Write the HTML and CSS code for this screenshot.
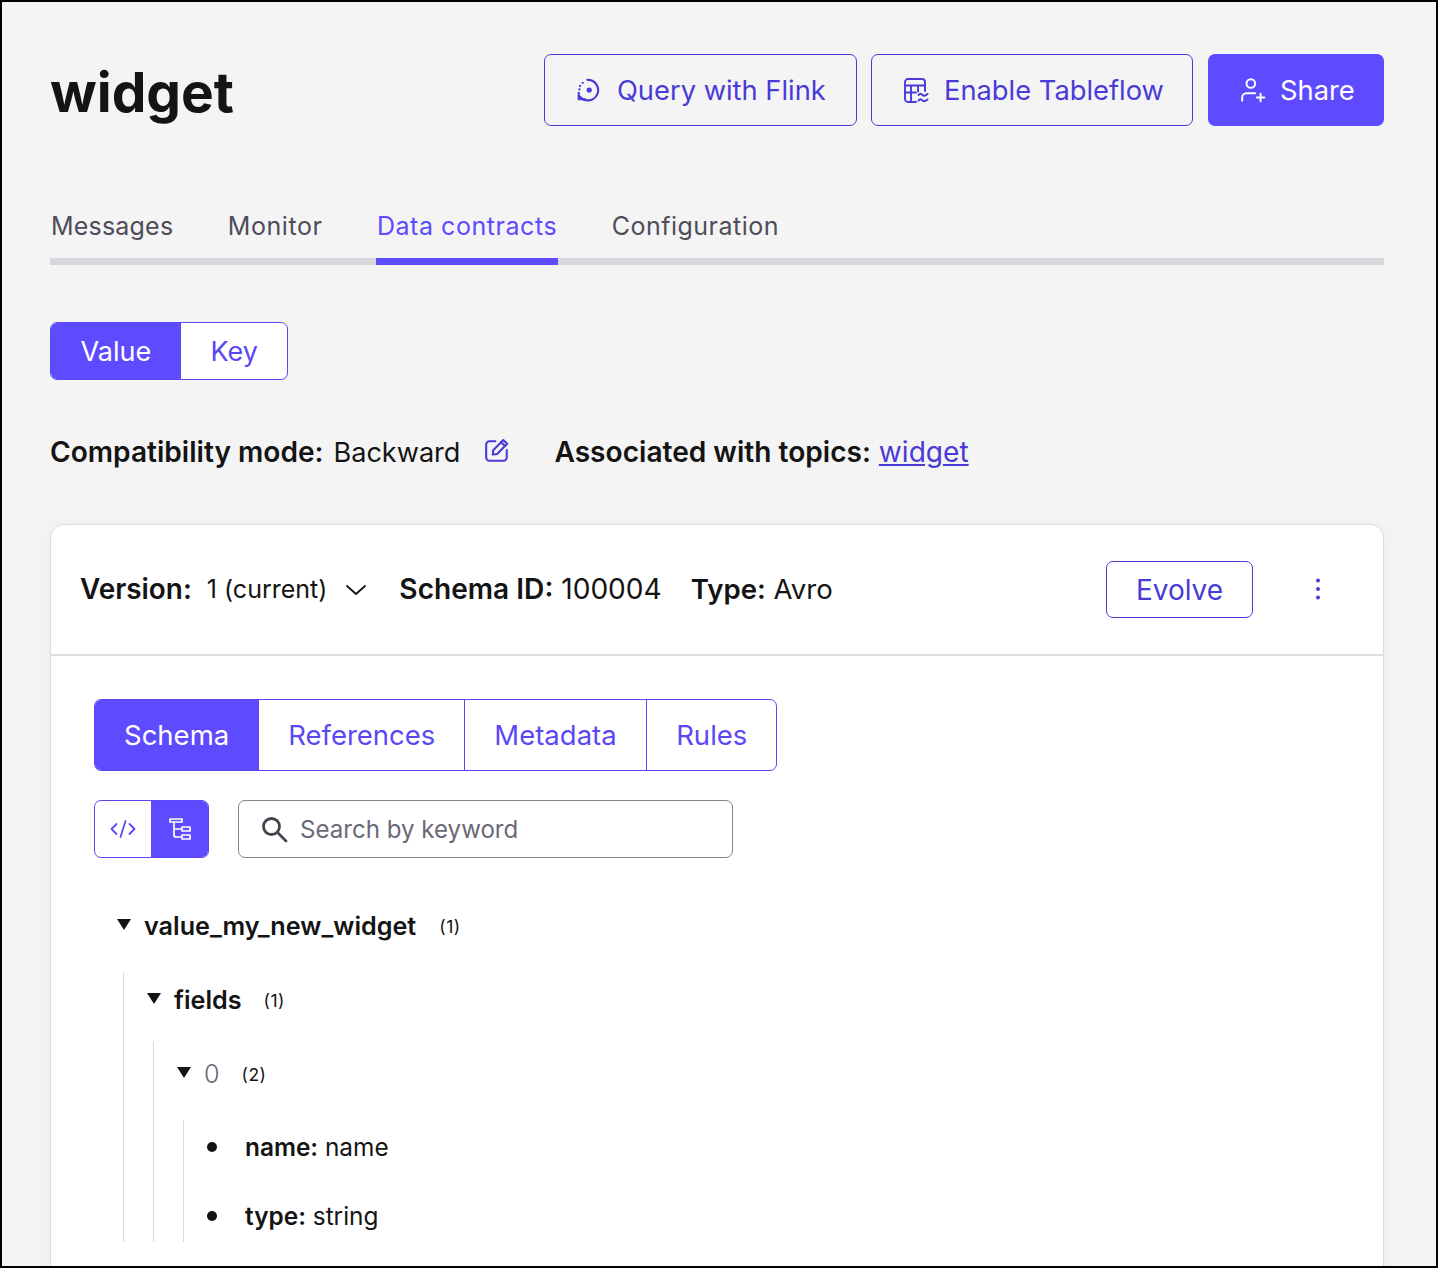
FILE: index.html
```html
<!DOCTYPE html>
<html lang="en">
<head>
<meta charset="utf-8">
<title>widget</title>
<link rel="stylesheet" href="styles.css">
</head>
<body>
<div class="frame">
  <header class="head">
    <h1 class="title">widget</h1>
    <div class="actions">
      <button class="btn btn-outline q">
        <svg class="ico" viewBox="0 0 24 24" fill="none" stroke="currentColor" stroke-width="2" stroke-linecap="round" stroke-linejoin="round"><path d="M10.500 2.600A9.500 9.500 0 1 1 3.500 18"/><path d="M3.200 11.500v.01M3.800 8.300v.01M6.200 5.400v.01" stroke-width="2.100"/><path d="M2.500 14.500V20.500h6"/><circle cx="12.200" cy="12" r="2.400" fill="currentColor" stroke="none"/></svg>
        <span>Query with Flink</span>
      </button>
      <button class="btn btn-outline t">
        <svg class="ico" viewBox="0 0 26 26" fill="none" stroke="currentColor" stroke-width="1.900" stroke-linecap="round" stroke-linejoin="round"><path d="M12 25H4a3 3 0 0 1-3-3V5a3 3 0 0 1 3-3h14a3 3 0 0 1 3 3v9"/><path d="M1 8.500h20M1 15.500h11M7 8.500V25M14 8.500v6"/><path d="M14.500 18c1.500-1.600 2.500-1.600 4 0 1.200 1.200 2.500 1.200 5 -1M14.500 23.500c1.500-1.600 2.500-1.600 4 0 1.200 1.200 2.500 1.200 5-1"/></svg>
        <span>Enable Tableflow</span>
      </button>
      <button class="btn btn-solid s">
        <svg class="ico" viewBox="0 0 24 24" fill="none" stroke="currentColor" stroke-width="1.8" stroke-linecap="round" stroke-linejoin="round"><circle cx="10" cy="6" r="4"/><path d="M2 22v-3a4 4 0 0 1 4-4h8"/><path d="M19 15.500v7M15.500 19h7"/></svg>
        <span>Share</span>
      </button>
    </div>
  </header>

  <nav class="tabs">
    <a class="tab tab-m">Messages</a>
    <a class="tab">Monitor</a>
    <a class="tab active">Data contracts</a>
    <a class="tab tab-c">Configuration</a>
  </nav>

  <div class="seg seg-top">
    <span class="seg-item on">Value</span>
    <span class="seg-item">Key</span>
  </div>

  <div class="meta">
    <b>Compatibility mode:</b>&nbsp;<span class="plain">Backward</span>
    <svg class="edit" viewBox="0 0 24 24" fill="none" stroke="currentColor" stroke-width="1.9" stroke-linecap="round" stroke-linejoin="round"><path d="M10.500 4H5a3 3 0 0 0-3 3v12a3 3 0 0 0 3 3h13a3 3 0 0 0 3-3v-7"/><path d="M8.500 12.200 17.800 2.800l3.600 3.500-9.300 9.300-4 .6z"/><path d="M15.800 4.800l3.600 3.500"/></svg>
    <b class="assoc">Associated with topics:</b>&nbsp;<a class="link">widget</a>
  </div>

  <section class="card">
    <div class="card-head">
      <b>Version:</b>
      <span class="ver">1 (current)</span>
      <svg class="chev" viewBox="0 0 22 12" fill="none" stroke="#141414" stroke-width="1.800" stroke-linecap="round" stroke-linejoin="round"><path d="M2 2l9 8 9-8"/></svg>
      <span class="fact"><b>Schema ID:</b> 100004</span>
      <span class="fact2"><b>Type:</b> Avro</span>
      <button class="evolve">Evolve</button>
      <svg class="kebab" viewBox="0 0 4 22" fill="#4a3bd6"><circle cx="2" cy="2.500" r="2"/><circle cx="2" cy="11" r="2"/><circle cx="2" cy="19.500" r="2"/></svg>
    </div>
    <div class="card-body">
      <div class="seg seg-sub">
        <span class="seg-item on">Schema</span>
        <span class="seg-item">References</span>
        <span class="seg-item seg-wide">Metadata</span>
        <span class="seg-item">Rules</span>
      </div>
      <div class="tools">
        <div class="view">
          <span class="view-btn">
            <svg viewBox="0 0 26 20" width="26" height="20" fill="none" stroke="currentColor" stroke-width="1.800" stroke-linecap="round" stroke-linejoin="round"><path d="M6.500 5 1.500 10l5 5M19.500 5l5 5-5 5M15.500 2l-5 16"/></svg>
          </span>
          <span class="view-btn on">
            <svg viewBox="0 0 24 24" width="24" height="24" fill="none" stroke="currentColor" stroke-width="1.700" stroke-linejoin="round"><path d="M2 2h12v3H2zM6 5v13a2 2 0 0 0 2 2h5M6 12h7M14 10h8v4h-8zM14 18h8v4h-8z"/></svg>
          </span>
        </div>
        <label class="search">
          <svg viewBox="0 0 28 28" width="28" height="28" fill="none" stroke="#45434f" stroke-width="2.800" stroke-linecap="round"><circle cx="11.500" cy="11.500" r="8"/><path d="M17.500 17.500 26 26"/></svg>
          <span>Search by keyword</span>
        </label>
      </div>

      <div class="tree">
        <div class="row r0"><i class="tri"></i><b>value_my_new_widget</b><small>(1)</small></div>
        <div class="branch b1">
          <div class="row r1"><i class="tri"></i><b>fields</b><small>(1)</small></div>
          <div class="branch b2">
            <div class="row r2"><i class="tri"></i><span class="idx">0</span><small>(2)</small></div>
            <div class="branch b3">
              <div class="leaf"><i class="dot"></i><b>name:</b> name</div>
              <div class="leaf"><i class="dot"></i><b>type:</b> string</div>
            </div>
          </div>
        </div>
      </div>
    </div>
  </section>
</div>
</body>
</html>
```

FILE: styles.css
```css
* { box-sizing: border-box; }
html, body { margin: 0; padding: 0; }
body { font-family: Inter, "Liberation Sans", sans-serif; color: #141414; }
b { font-weight: 600; }
button { font-family: inherit; cursor: pointer; }

.frame {
  width: 1438px;
  height: 1268px;
  overflow: hidden;
  border: 2px solid #000;
  background: #f4f4f5;
  padding: 52px 52px 0 48px;
}

.head { display: flex; justify-content: space-between; align-items: flex-start; height: 72px; }
.title { margin: 2px 0 0; font-size: 55px; line-height: 72px; font-weight: 700; letter-spacing: 0; }
.actions { display: flex; gap: 14px; }
.btn {
  height: 72px;
  display: flex;
  align-items: center;
  justify-content: flex-start;
  gap: 14px;
  padding: 0 0 0 32px;
  border-radius: 7px;
  font-size: 27.300px;
}
.btn-outline { background: transparent; border: 1px solid #4a3bd6; color: #4a3bd6; }
.btn-solid { background: #5e4aff; border: 0; color: #fff; }
.btn.q { width: 313px; padding-left: 31px; gap: 15px; }
.btn.t { width: 322px; }
.btn.s { width: 176px; margin-left: 1px; }
.ico { width: 26px; height: 26px; flex: none; }

.tabs {
  display: flex;
  gap: 52.500px;
  margin-top: 60px;
  height: 79px;
  border-bottom: 7px solid #d7d7dc;
}
.tab {
  height: 79px;
  padding: 22px 1px 0 1px;
  font-size: 25px;
  line-height: 36px;
  font-weight: 400;
  letter-spacing: 0.55px;
  color: #4f4d59;
  border-bottom: 7px solid transparent;
}
.tab-m { letter-spacing: 0.2px; }
.tab-c { letter-spacing: 0.5px; }
.tab.active { color: #5e4aff; border-bottom-color: #5e4aff; }

.seg { display: inline-flex; border: 1px solid #5b48f5; border-radius: 7px; overflow: hidden; background: #fff; }
.seg-item {
  display: flex;
  align-items: center;
  padding: 0 29px;
  font-size: 27.500px;
  color: #5b48f5;
  border-left: 1px solid #5b48f5;
}
.seg-item:first-child { border-left: 0; }
.seg-item.on { background: #5e4aff; color: #fff; }
.seg-wide { padding-right: 29.500px; }
.seg-top { display: flex; width: 238px; height: 58px; margin-top: 57px; }
.seg-top .seg-item { font-size: 27px; padding-left: 29.500px; }
.seg-top .seg-item.on { width: 129px; }
.seg-sub { display: flex; width: 683px; height: 72px; }

.meta { display: flex; align-items: center; margin-top: 52px; height: 40px; font-size: 28.100px; }
.plain { font-size: 27.100px; margin-left: 2px; }
.edit { width: 26px; height: 26px; margin: -5px 0 0 24px; color: #4a3bd6; }
.assoc { margin-left: 44px; }
.link { color: #4a3bd6; text-decoration: underline; }

.card {
  margin-top: 52px;
  background: #fff;
  border: 1px solid #dcdce1;
  border-radius: 14px;
  height: 800px;
  box-shadow: 0 0 16px rgba(0, 0, 0, 0.03);
}
.card-head {
  display: flex;
  align-items: center;
  height: 131px;
  padding: 0 63px 2px 29px;
  border-bottom: 2px solid #dcdce1;
  font-size: 27.900px;
}
.ver { margin-left: 15px; font-size: 25px; }
.chev { width: 22px; height: 12px; margin: 2px 0 0 18px; }
.fact { margin-left: 32px; font-size: 28.100px; }
.fact2 { margin-left: 29px; font-size: 27.600px; }
.evolve {
  margin: 2px 0 0 auto;
  width: 147px;
  height: 57px;
  background: #fff;
  border: 1px solid #4a3bd6;
  border-radius: 7px;
  color: #4a3bd6;
  font-size: 28px;
}
.kebab { width: 4px; height: 22px; margin-left: 63px; }

.card-body { padding: 43px 0 0 43px; }
.tools { display: flex; gap: 29px; margin-top: 29px; }
.view { display: flex; width: 115px; height: 58px; border: 1px solid #5b48f5; border-radius: 7px; overflow: hidden; background: #fff; }
.view-btn { width: 56px; flex: none; display: flex; align-items: center; justify-content: center; color: #5b48f5; }
.view-btn.on { flex: 1; background: #5e4aff; color: #fff; }
.search {
  width: 495px;
  height: 58px;
  display: flex;
  align-items: center;
  gap: 12px;
  padding-left: 21px;
  border: 1px solid #86848f;
  border-radius: 7px;
  font-size: 24.100px;
  color: #6b6975;
}

.tree { margin-top: 31px; margin-left: 23px; font-size: 25.200px; }
.row { display: flex; align-items: center; }
.r0 { height: 74px; }
.r1 { height: 54px; }
.r2 { height: 66px; }
.row b { margin-left: 13px; }
.row small { margin-left: 23px; font-size: 17.500px; font-weight: 400; letter-spacing: 0.5px; }
.r1 small, .r2 small { margin-left: 22px; }
.tri { width: 0; height: 0; border-left: 7.500px solid transparent; border-right: 7.500px solid transparent; border-top: 11px solid #141414; margin-top: -3px; flex: none; }
.idx { margin-left: 13px; color: #6b6975; font-weight: 300; }
.branch { border-left: 1px solid #d8d8dc; margin-left: 6px; padding-left: 23px; }
.b1 { margin-top: 10px; }
.b2 { margin-top: 14px; }
.b3 { margin-top: 13px; display: flex; flex-direction: column; gap: 17px; padding-top: 1px; }
.leaf { position: relative; display: flex; align-items: center; height: 52px; padding-left: 38px; white-space: pre; font-size: 24.400px; }
.dot { position: absolute; left: 0; width: 10px; height: 10px; border-radius: 50%; background: #141414; }
```
